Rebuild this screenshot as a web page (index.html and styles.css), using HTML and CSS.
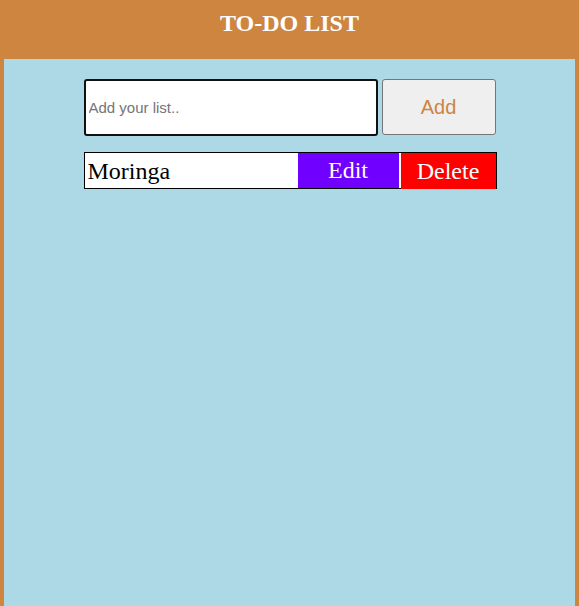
FILE: index.html
```html
<!DOCTYPE html>
<html>
<head>
<meta charset="utf-8">
<link rel="stylesheet" href="styles.css">
</head>
<body>
<header class="header"><h1 class="title">TO-DO LIST</h1></header>
<main class="main">
  <div class="content">
    <form class="form">
      <input class="input" type="text" placeholder="Add your list..">
      <button class="add" type="button">Add</button>
    </form>
    <ul class="list">
      <li class="item">
        <span class="item-text">Moringa</span>
        <button class="edit" type="button">Edit</button>
        <button class="delete" type="button">Delete</button>
      </li>
    </ul>
  </div>
</main>
</body>
</html>
```
FILE: styles.css
```css
html, body {
  margin: 0;
  padding: 0;
}
body {
  background: #cd853f;
  font-family: "Liberation Serif", "Times New Roman", serif;
  min-height: 606px;
}
.header {
  height: 59px;
  box-sizing: border-box;
  padding-top: 9px;
}
.title {
  margin: 0;
  text-align: center;
  color: #fff;
  font-size: 24px;
  line-height: 28px;
  font-weight: bold;
}
.main {
  margin: 0 4px;
  background: #add8e6;
  min-height: calc(100vh - 59px);
  padding-top: 20px;
  box-sizing: border-box;
}
.content {
  width: 412px;
  margin: 0 auto;
}
.form {
  display: flex;
  gap: 4px;
  align-items: flex-start;
  margin: 0;
}
.input {
  width: 294px;
  height: 57px;
  box-sizing: border-box;
  border: 2px solid #111;
  border-radius: 3px;
  padding: 0 3px;
  font-family: "Liberation Sans", Arial, sans-serif;
  font-size: 15px;
  background: #fff;
  outline: none;
}
.input::placeholder {
  color: #757575;
}
.add {
  width: 114px;
  height: 56px;
  box-sizing: border-box;
  background: #efefef;
  border: 1px solid #767676;
  border-radius: 3px;
  color: #cd853f;
  font-family: "Liberation Sans", Arial, sans-serif;
  font-size: 20px;
  padding: 0;
}
.list {
  list-style: none;
  margin: 16px 0 0;
  padding: 0;
  width: 413px;
}
.item {
  display: flex;
  align-items: flex-start;
  height: 37px;
  box-sizing: border-box;
  border: 1px solid #000;
  background: #fff;
}
.item-text {
  flex: 1;
  font-size: 24px;
  line-height: 36px;
  padding-left: 3px;
  color: #000;
}
.edit, .delete {
  border: none;
  padding: 0;
  margin: 0;
  color: #fff;
  font-family: "Liberation Serif", "Times New Roman", serif;
  font-size: 24px;
}
.edit {
  width: 101px;
  height: 35px;
  background: #7000ff;
}
.delete {
  width: 95px;
  height: 36px;
  margin-left: 2px;
  background: #ff0000;
}
```
